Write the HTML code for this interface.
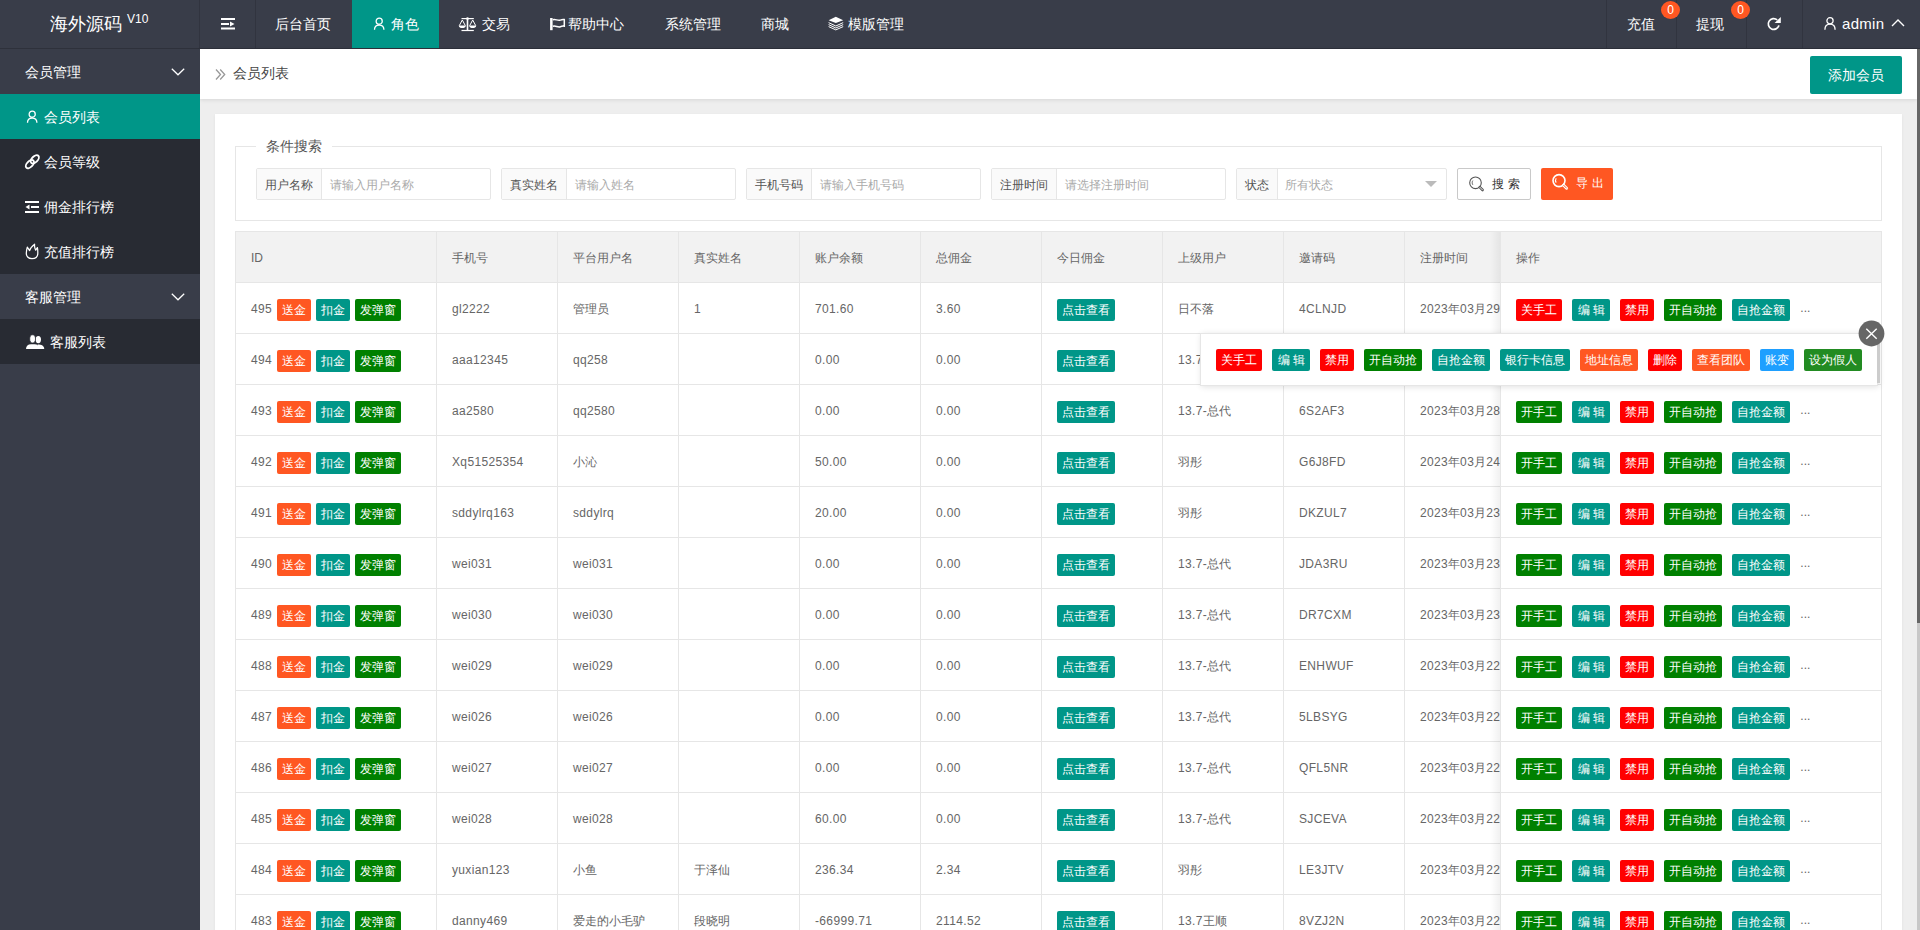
<!DOCTYPE html><html><head><meta charset="utf-8"><title>会员列表</title><style>
*{box-sizing:border-box;margin:0;padding:0}
html,body{width:1920px;height:930px;overflow:hidden}
body{font-family:"Liberation Sans",sans-serif;background:#eeeeee;position:relative;color:#666}
.abs{position:absolute}
svg.abs{z-index:3}
#hdr{left:0;top:0;width:1920px;height:49px;background:#393d49;border-bottom:1px solid #2e313b}
.sep{position:absolute;top:0;width:1px;height:48px;background:#31343f}
.logo{position:absolute;left:0;top:0;width:199px;height:48px;color:#fff;font-size:18px;line-height:48px}
.logo .t{position:absolute;left:50px;top:0}
.logo sup{position:absolute;left:127px;top:-5px;font-size:12px;line-height:48px}
.nav{position:absolute;top:0;height:48px;line-height:48px;font-size:14px;color:#fff;white-space:nowrap}
.nav .ic{position:absolute}
.side{left:0;top:49px;width:200px;height:881px;background:#393d49;z-index:2}
.si{position:absolute;left:0;width:200px;height:45px;line-height:46px;font-size:14px;color:#fff;white-space:nowrap}
.si.child{background:#282b33}
.si.act{background:#009688}
.crumb{left:200px;top:49px;width:1717px;height:50px;background:#fff;box-shadow:0 1px 4px rgba(0,0,0,.1)}
.scroll{left:1917px;top:49px;width:3px;height:881px;background:linear-gradient(to bottom,#666 0,#666 574px,#c8c8c8 574px)}
.card{left:215px;top:114px;width:1687px;height:830px;background:#fff;box-shadow:0 1px 3px rgba(0,0,0,.06)}
.fs{left:235px;top:146px;width:1647px;height:75px;border:1px solid #e6e6e6}
.legend{position:absolute;left:256px;top:136px;padding:0 10px;background:#fff;font-size:14px;line-height:20px;color:#555}
.ig{position:absolute;top:168px;height:32px;border:1px solid #e6e6e6;border-radius:2px;background:#fff;font-size:12px}
.ig .lb{position:absolute;left:0;top:0;height:30px;line-height:32px;background:#fafafa;border-right:1px solid #e6e6e6;color:#555;padding:0 8px}
.ig .ph{position:absolute;top:1px;height:30px;line-height:30px;color:#aaa}
.btn{position:absolute;top:168px;height:32px;line-height:30px;font-size:12px;border-radius:2px}
table{border-collapse:collapse;table-layout:fixed}
.tbw{left:235px;top:231px;width:1266px;height:699px;overflow:hidden}
.tb{position:absolute;left:0;top:0;width:1647px;border:1px solid #e6e6e6}
.tb td{height:51px;border:1px solid #e6e6e6;padding:0 15px;font-size:12px;color:#666;white-space:nowrap;overflow:hidden;line-height:20px}
.tb tr.h td{background:#f2f2f2}
.bd{display:inline-block;height:22px;line-height:22px;padding:0 5px;color:#fff;font-size:12px;border-radius:2px;vertical-align:middle}
.bd.e{padding:0 5.5px}
.la{letter-spacing:0.35px}
.tb tr.b td>div,.fix tr.b td>div{position:relative;top:1px}
.tb tr.b .bd,.fix tr.b .bd{position:relative;top:1px}
.tb tr.h td>div,.fix tr.h td>div{position:relative;top:1px}
.fix{position:absolute;left:1500px;top:231px;width:381px;background:#fff}
.fsh{left:1490px;top:232px;width:10px;height:698px;background:linear-gradient(to right,rgba(0,0,0,0),rgba(0,0,0,.055))}
.fix td{height:51px;border:1px solid #e6e6e6;padding:0 15px 0 15px;font-size:12px;color:#666;white-space:nowrap;line-height:20px}
.fix tr.h td{background:#f2f2f2}
.pop{left:1200px;top:333px;width:678px;height:53px;background:#fff;border:1px solid #e6e6e6;box-shadow:1px 1px 6px rgba(0,0,0,.12)}
</style></head><body>
<div id="hdr" class="abs">
<div class="logo"><span class="t">海外源码</span><sup>V10</sup></div>
<div class="sep" style="left:199px"></div>
<div class="sep" style="left:255px"></div>
<div class="sep" style="left:1606px"></div>
<div class="sep" style="left:1676px"></div>
<div class="sep" style="left:1746px"></div>
<div class="sep" style="left:1802px"></div>
<svg class="abs" style="left:221px;top:17px" width="15" height="14" viewBox="0 0 15 14"><rect x="0" y="1" width="14" height="2" fill="#fff"/><rect x="0" y="6" width="8" height="2" fill="#fff"/><path d="M9 4.5 L13.5 7 L9 9.5Z" fill="#fff"/><rect x="0" y="10.5" width="14" height="2" fill="#fff"/></svg>
<div class="abs" style="left:352px;top:0;width:87px;height:48px;background:#009688"></div>
<div class="nav" style="left:275px">后台首页</div>
<div class="nav" style="left:391px">角色</div>
<div class="nav" style="left:482px">交易</div>
<div class="nav" style="left:568px">帮助中心</div>
<div class="nav" style="left:665px">系统管理</div>
<div class="nav" style="left:761px">商城</div>
<div class="nav" style="left:848px">模版管理</div>
<div class="nav" style="left:1627px">充值</div>
<div class="nav" style="left:1696px">提现</div>
<div class="nav" style="left:1842px;font-size:15px;letter-spacing:0.3px">admin</div>
<svg class="abs" style="left:373px;top:17px" width="13" height="14" viewBox="0 0 13 14"><circle cx="6.2" cy="4.2" r="3.05" fill="none" stroke="#fff" stroke-width="1.3"/><path d="M1.5 12.8 C1.5 9.8 3.4 8.1 6.2 8.1 C9 8.1 10.9 9.8 10.9 12.8" fill="none" stroke="#fff" stroke-width="1.3"/></svg>
<svg class="abs" style="left:1824px;top:17px" width="12" height="13" viewBox="0 0 12 13"><circle cx="6" cy="3.8" r="3.1" fill="none" stroke="#fff" stroke-width="1.3"/><path d="M0.9 12.8 C0.9 9 3.2 7.2 6 7.2 C8.8 7.2 11.1 9 11.1 12.8" fill="none" stroke="#fff" stroke-width="1.3"/></svg>
<svg class="abs" style="left:458px;top:17px" width="19" height="15" viewBox="0 0 19 15"><rect x="3.5" y="1" width="12.3" height="1.2" fill="#fff"/><circle cx="9.5" cy="1.6" r="1.3" fill="#fff"/><rect x="8.7" y="1.5" width="1.6" height="12.3" fill="#fff"/><rect x="3.5" y="12.9" width="12.3" height="1.2" fill="#fff"/><path d="M4.3 3 L1.3 8.6 M4.3 3 L7.3 8.6 M14.7 3 L11.7 8.6 M14.7 3 L17.7 8.6" stroke="#fff" stroke-width="1" fill="none"/><path d="M0.8 8.4 H7.8 C7.8 10.3 6 11.1 4.3 11.1 C2.6 11.1 0.8 10.3 0.8 8.4Z M11.2 8.4 H18.2 C18.2 10.3 16.4 11.1 14.7 11.1 C13 11.1 11.2 10.3 11.2 8.4Z" fill="#fff"/></svg>
<svg class="abs" style="left:550px;top:18px" width="16" height="13" viewBox="0 0 16 13"><rect x="0.1" y="0" width="2.5" height="12.2" fill="#fff"/><path d="M2.8 1.7 C5.3 0.5 7.8 3.1 10.3 2.1 C11.8 1.5 12.8 1.3 14.3 1.6 V8.2 C12.8 7.9 11.8 8.1 10.3 8.7 C7.8 9.7 5.3 7.1 2.8 8.3" fill="none" stroke="#fff" stroke-width="1.5"/></svg>
<svg class="abs" style="left:828px;top:16px" width="16" height="15" viewBox="0 0 16 15"><path d="M0.6 4.2 L7.8 0.8 L15.2 4.2 L7.8 7 Z" fill="#fff"/><path d="M0.6 6.6 L7.8 10 L15.2 6.6 M0.6 8.6 L7.8 12 L15.2 8.6 M0.6 10.6 L7.8 13.9 L15.2 10.6" stroke="#fff" stroke-width="1" fill="none"/></svg>
<svg class="abs" style="left:1766px;top:16px" width="16" height="16" viewBox="0 0 16 16"><path d="M12.9 9.4 A5.4 5.4 0 1 1 11.2 3.9" fill="none" stroke="#fff" stroke-width="1.7"/><path d="M14.8 1 L14.8 7 L8.6 7 Z" fill="#fff"/></svg>
<svg class="abs" style="left:1891px;top:18px" width="14" height="10" viewBox="0 0 14 10"><path d="M1 8 L7 2 L13 8" fill="none" stroke="#fff" stroke-width="1.4"/></svg>
<div class="abs" style="left:1661.0px;top:1px;width:19px;height:18px;border-radius:50%;background:#ff5722;color:#fff;font-size:12px;line-height:18px;text-align:center">0</div>
<div class="abs" style="left:1731.0px;top:1px;width:19px;height:18px;border-radius:50%;background:#ff5722;color:#fff;font-size:12px;line-height:18px;text-align:center">0</div>
</div>
<div class="side abs">
<div class="si" style="top:0px"><span class="abs" style="left:25px;top:0">会员管理</span></div>
<div class="si act" style="top:45px"><span class="abs" style="left:44px;top:0">会员列表</span></div>
<div class="si child" style="top:90px"><span class="abs" style="left:44px;top:0">会员等级</span></div>
<div class="si child" style="top:135px"><span class="abs" style="left:44px;top:0">佣金排行榜</span></div>
<div class="si child" style="top:180px"><span class="abs" style="left:44px;top:0">充值排行榜</span></div>
<div class="si" style="top:225px"><span class="abs" style="left:25px;top:0">客服管理</span></div>
<div class="si child" style="top:270px"><span class="abs" style="left:50px;top:0">客服列表</span></div>
<svg class="abs" style="left:171px;top:19px" width="14" height="9" viewBox="0 0 14 9"><path d="M0.8 0.8 L7 6.8 L13.2 0.8" fill="none" stroke="#fff" stroke-width="1.25"/></svg>
<svg class="abs" style="left:171px;top:244px" width="14" height="9" viewBox="0 0 14 9"><path d="M0.8 0.8 L7 6.8 L13.2 0.8" fill="none" stroke="#fff" stroke-width="1.25"/></svg>
</div>
<svg class="abs" style="left:26px;top:110px" width="13" height="14" viewBox="0 0 13 14"><circle cx="6.2" cy="4.2" r="3.05" fill="none" stroke="#fff" stroke-width="1.3"/><path d="M1.5 12.8 C1.5 9.8 3.4 8.1 6.2 8.1 C9 8.1 10.9 9.8 10.9 12.8" fill="none" stroke="#fff" stroke-width="1.3"/></svg>
<svg class="abs" style="left:24px;top:153px" width="17" height="17" viewBox="0 0 17 17"><ellipse cx="10.8" cy="6.3" rx="5" ry="2.9" transform="rotate(-45 10.8 6.3)" fill="none" stroke="#fff" stroke-width="1.9"/><ellipse cx="5.9" cy="11.1" rx="5" ry="2.9" transform="rotate(-45 5.9 11.1)" fill="none" stroke="#fff" stroke-width="1.9"/></svg>
<svg class="abs" style="left:25px;top:200px" width="14" height="14" viewBox="0 0 14 14"><rect x="0" y="1" width="14" height="2" fill="#fff"/><rect x="6" y="6" width="8" height="2" fill="#fff"/><path d="M4.5 4.5 L0.5 7 L4.5 9.5Z" fill="#fff"/><rect x="0" y="11" width="14" height="2" fill="#fff"/></svg>
<svg class="abs" style="left:25px;top:243px" width="14" height="17" viewBox="0 0 14 17"><path d="M7 15.6 C3 15.6 1.3 13 1.3 10.3 C1.3 7.8 1.8 6 2.3 4.2 L4.6 7.6 C5.2 5 7.3 3 9.6 1.2 C9.3 3.6 9.9 5.6 10.7 7.2 L12.4 4.6 C12.9 6.5 12.8 8.5 12.8 10.3 C12.8 13 11 15.6 7 15.6Z" fill="none" stroke="#fff" stroke-width="1.25" stroke-linejoin="round"/></svg>
<svg class="abs" style="left:25px;top:334px" width="20" height="16" viewBox="0 0 20 16"><ellipse cx="13.3" cy="5.6" rx="2.7" ry="3.7" fill="#fff"/><path d="M12.5 10.6 C16.8 10.6 19.2 12 19.2 15 H13 Z" fill="#fff"/><ellipse cx="7.6" cy="4.9" rx="2.9" ry="4.1" fill="#fff" stroke="#282b33" stroke-width="0.8"/><path d="M1 15 C1 12 3 10.3 6 10.3 H9.5 C12.5 10.3 14.3 12 14.3 15Z" fill="#fff"/></svg>
<div class="crumb abs"></div>
<svg class="abs" style="left:215px;top:68px" width="12" height="13" viewBox="0 0 12 13"><path d="M1 1.5 L5.5 6.5 L1 11.5 M5.2 1.5 L9.7 6.5 L5.2 11.5" fill="none" stroke="#999" stroke-width="1.3"/></svg>
<div class="abs" style="left:233px;top:63px;font-size:14px;line-height:20px;color:#444">会员列表</div>
<div class="abs" style="left:1810px;top:56px;width:92px;height:38px;background:#009688;border-radius:2px;color:#fff;font-size:14px;line-height:38px;text-align:center">添加会员</div>
<div class="scroll abs"></div>
<div class="card abs"></div>
<div class="fs abs"></div>
<div class="legend">条件搜索</div>
<div class="ig" style="left:256px;width:235px"><span class="lb" style="width:65px">用户名称</span><span class="ph" style="left:73px">请输入用户名称</span></div>
<div class="ig" style="left:501px;width:235px"><span class="lb" style="width:65px">真实姓名</span><span class="ph" style="left:73px">请输入姓名</span></div>
<div class="ig" style="left:746px;width:235px"><span class="lb" style="width:65px">手机号码</span><span class="ph" style="left:73px">请输入手机号码</span></div>
<div class="ig" style="left:991px;width:235px"><span class="lb" style="width:65px">注册时间</span><span class="ph" style="left:73px">请选择注册时间</span></div>
<div class="ig" style="left:1236px;width:211px"><span class="lb" style="width:41px">状态</span><span class="ph" style="left:48px">所有状态</span><svg class="abs" style="left:188px;top:12px" width="12" height="7" viewBox="0 0 12 7"><path d="M0 0 H12 L6 6Z" fill="#bbb"/></svg></div>
<div class="btn" style="left:1457px;width:74px;border:1px solid #c9c9c9;background:#fff;color:#333"><svg class="abs" style="left:10px;top:7px" width="17" height="17" viewBox="0 0 17 17"><circle cx="7.5" cy="6.8" r="5.8" fill="none" stroke="#555" stroke-width="1.1"/><path d="M11.8 11.2 L14.6 14" stroke="#555" stroke-width="2.6" stroke-linecap="round"/><path d="M11.9 11.3 L14.5 13.9" stroke="#fff" stroke-width="0.9" stroke-linecap="round"/><path d="M4.8 4.6 C4 5.8 4 7.6 4.8 8.8" fill="none" stroke="#555" stroke-width="0.9"/></svg><span class="abs" style="left:34px;top:0;letter-spacing:4px">搜索</span></div>
<div class="btn" style="left:1541px;width:72px;background:#ff5722;color:#fff"><svg class="abs" style="left:10px;top:5px" width="19" height="19" viewBox="0 0 19 19"><circle cx="8" cy="7.6" r="6" fill="none" stroke="#fff" stroke-width="1.6"/><path d="M12.6 12.2 L15.6 15.2" stroke="#fff" stroke-width="3" stroke-linecap="round"/><path d="M12.7 12.3 L15.5 15.1" stroke="#ff5722" stroke-width="1" stroke-linecap="round"/><path d="M5.2 5.2 C4.4 6.4 4.4 8.4 5.2 9.6" fill="none" stroke="#fff" stroke-width="1.1"/></svg><span class="abs" style="left:35px;top:0;letter-spacing:4px">导出</span></div>
<div class="tbw abs"><table class="tb"><colgroup><col style="width:201px"><col style="width:121px"><col style="width:121px"><col style="width:121px"><col style="width:121px"><col style="width:121px"><col style="width:121px"><col style="width:121px"><col style="width:121px"><col style="width:478px"></colgroup>
<tr class="h"><td><div>ID</div></td><td><div>手机号</div></td><td><div>平台用户名</div></td><td><div>真实姓名</div></td><td><div>账户余额</div></td><td><div>总佣金</div></td><td><div>今日佣金</div></td><td><div>上级用户</div></td><td><div>邀请码</div></td><td><div>注册时间</div></td></tr>
<tr class="b"><td><div><span style="position:relative;top:1px"><span class="la">495</span></span><span class="bd" style="background:#ff5722;margin-left:5px">送金</span><span class="bd" style="background:#009688;margin-left:5px">扣金</span><span class="bd" style="background:#008000;margin-left:5px">发弹窗</span></div></td><td><div><span class="la">gl2222</span></div></td><td><div>管理员</div></td><td><div><span class="la">1</span></div></td><td><div><span class="la">701.60</span></div></td><td><div><span class="la">3.60</span></div></td><td><div><span class="bd" style="background:#009688;margin-left:0px">点击查看</span></div></td><td><div>日不落</div></td><td><div><span class="la">4CLNJD</span></div></td><td><div><span class="la">2023</span>年<span class="la">03</span>月<span class="la">29</span></div></td></tr>
<tr class="b"><td><div><span style="position:relative;top:1px"><span class="la">494</span></span><span class="bd" style="background:#ff5722;margin-left:5px">送金</span><span class="bd" style="background:#009688;margin-left:5px">扣金</span><span class="bd" style="background:#008000;margin-left:5px">发弹窗</span></div></td><td><div><span class="la">aaa12345</span></div></td><td><div><span class="la">qq258</span></div></td><td><div></div></td><td><div><span class="la">0.00</span></div></td><td><div><span class="la">0.00</span></div></td><td><div><span class="bd" style="background:#009688;margin-left:0px">点击查看</span></div></td><td><div><span class="la">13.7-</span>总代</div></td><td><div><span class="la">6S2AF3</span></div></td><td><div><span class="la">2023</span>年<span class="la">03</span>月<span class="la">28</span></div></td></tr>
<tr class="b"><td><div><span style="position:relative;top:1px"><span class="la">493</span></span><span class="bd" style="background:#ff5722;margin-left:5px">送金</span><span class="bd" style="background:#009688;margin-left:5px">扣金</span><span class="bd" style="background:#008000;margin-left:5px">发弹窗</span></div></td><td><div><span class="la">aa2580</span></div></td><td><div><span class="la">qq2580</span></div></td><td><div></div></td><td><div><span class="la">0.00</span></div></td><td><div><span class="la">0.00</span></div></td><td><div><span class="bd" style="background:#009688;margin-left:0px">点击查看</span></div></td><td><div><span class="la">13.7-</span>总代</div></td><td><div><span class="la">6S2AF3</span></div></td><td><div><span class="la">2023</span>年<span class="la">03</span>月<span class="la">28</span></div></td></tr>
<tr class="b"><td><div><span style="position:relative;top:1px"><span class="la">492</span></span><span class="bd" style="background:#ff5722;margin-left:5px">送金</span><span class="bd" style="background:#009688;margin-left:5px">扣金</span><span class="bd" style="background:#008000;margin-left:5px">发弹窗</span></div></td><td><div><span class="la">Xq51525354</span></div></td><td><div>小沁</div></td><td><div></div></td><td><div><span class="la">50.00</span></div></td><td><div><span class="la">0.00</span></div></td><td><div><span class="bd" style="background:#009688;margin-left:0px">点击查看</span></div></td><td><div>羽彤</div></td><td><div><span class="la">G6J8FD</span></div></td><td><div><span class="la">2023</span>年<span class="la">03</span>月<span class="la">24</span></div></td></tr>
<tr class="b"><td><div><span style="position:relative;top:1px"><span class="la">491</span></span><span class="bd" style="background:#ff5722;margin-left:5px">送金</span><span class="bd" style="background:#009688;margin-left:5px">扣金</span><span class="bd" style="background:#008000;margin-left:5px">发弹窗</span></div></td><td><div><span class="la">sddylrq163</span></div></td><td><div><span class="la">sddylrq</span></div></td><td><div></div></td><td><div><span class="la">20.00</span></div></td><td><div><span class="la">0.00</span></div></td><td><div><span class="bd" style="background:#009688;margin-left:0px">点击查看</span></div></td><td><div>羽彤</div></td><td><div><span class="la">DKZUL7</span></div></td><td><div><span class="la">2023</span>年<span class="la">03</span>月<span class="la">23</span></div></td></tr>
<tr class="b"><td><div><span style="position:relative;top:1px"><span class="la">490</span></span><span class="bd" style="background:#ff5722;margin-left:5px">送金</span><span class="bd" style="background:#009688;margin-left:5px">扣金</span><span class="bd" style="background:#008000;margin-left:5px">发弹窗</span></div></td><td><div><span class="la">wei031</span></div></td><td><div><span class="la">wei031</span></div></td><td><div></div></td><td><div><span class="la">0.00</span></div></td><td><div><span class="la">0.00</span></div></td><td><div><span class="bd" style="background:#009688;margin-left:0px">点击查看</span></div></td><td><div><span class="la">13.7-</span>总代</div></td><td><div><span class="la">JDA3RU</span></div></td><td><div><span class="la">2023</span>年<span class="la">03</span>月<span class="la">23</span></div></td></tr>
<tr class="b"><td><div><span style="position:relative;top:1px"><span class="la">489</span></span><span class="bd" style="background:#ff5722;margin-left:5px">送金</span><span class="bd" style="background:#009688;margin-left:5px">扣金</span><span class="bd" style="background:#008000;margin-left:5px">发弹窗</span></div></td><td><div><span class="la">wei030</span></div></td><td><div><span class="la">wei030</span></div></td><td><div></div></td><td><div><span class="la">0.00</span></div></td><td><div><span class="la">0.00</span></div></td><td><div><span class="bd" style="background:#009688;margin-left:0px">点击查看</span></div></td><td><div><span class="la">13.7-</span>总代</div></td><td><div><span class="la">DR7CXM</span></div></td><td><div><span class="la">2023</span>年<span class="la">03</span>月<span class="la">23</span></div></td></tr>
<tr class="b"><td><div><span style="position:relative;top:1px"><span class="la">488</span></span><span class="bd" style="background:#ff5722;margin-left:5px">送金</span><span class="bd" style="background:#009688;margin-left:5px">扣金</span><span class="bd" style="background:#008000;margin-left:5px">发弹窗</span></div></td><td><div><span class="la">wei029</span></div></td><td><div><span class="la">wei029</span></div></td><td><div></div></td><td><div><span class="la">0.00</span></div></td><td><div><span class="la">0.00</span></div></td><td><div><span class="bd" style="background:#009688;margin-left:0px">点击查看</span></div></td><td><div><span class="la">13.7-</span>总代</div></td><td><div><span class="la">ENHWUF</span></div></td><td><div><span class="la">2023</span>年<span class="la">03</span>月<span class="la">22</span></div></td></tr>
<tr class="b"><td><div><span style="position:relative;top:1px"><span class="la">487</span></span><span class="bd" style="background:#ff5722;margin-left:5px">送金</span><span class="bd" style="background:#009688;margin-left:5px">扣金</span><span class="bd" style="background:#008000;margin-left:5px">发弹窗</span></div></td><td><div><span class="la">wei026</span></div></td><td><div><span class="la">wei026</span></div></td><td><div></div></td><td><div><span class="la">0.00</span></div></td><td><div><span class="la">0.00</span></div></td><td><div><span class="bd" style="background:#009688;margin-left:0px">点击查看</span></div></td><td><div><span class="la">13.7-</span>总代</div></td><td><div><span class="la">5LBSYG</span></div></td><td><div><span class="la">2023</span>年<span class="la">03</span>月<span class="la">22</span></div></td></tr>
<tr class="b"><td><div><span style="position:relative;top:1px"><span class="la">486</span></span><span class="bd" style="background:#ff5722;margin-left:5px">送金</span><span class="bd" style="background:#009688;margin-left:5px">扣金</span><span class="bd" style="background:#008000;margin-left:5px">发弹窗</span></div></td><td><div><span class="la">wei027</span></div></td><td><div><span class="la">wei027</span></div></td><td><div></div></td><td><div><span class="la">0.00</span></div></td><td><div><span class="la">0.00</span></div></td><td><div><span class="bd" style="background:#009688;margin-left:0px">点击查看</span></div></td><td><div><span class="la">13.7-</span>总代</div></td><td><div><span class="la">QFL5NR</span></div></td><td><div><span class="la">2023</span>年<span class="la">03</span>月<span class="la">22</span></div></td></tr>
<tr class="b"><td><div><span style="position:relative;top:1px"><span class="la">485</span></span><span class="bd" style="background:#ff5722;margin-left:5px">送金</span><span class="bd" style="background:#009688;margin-left:5px">扣金</span><span class="bd" style="background:#008000;margin-left:5px">发弹窗</span></div></td><td><div><span class="la">wei028</span></div></td><td><div><span class="la">wei028</span></div></td><td><div></div></td><td><div><span class="la">60.00</span></div></td><td><div><span class="la">0.00</span></div></td><td><div><span class="bd" style="background:#009688;margin-left:0px">点击查看</span></div></td><td><div><span class="la">13.7-</span>总代</div></td><td><div><span class="la">SJCEVA</span></div></td><td><div><span class="la">2023</span>年<span class="la">03</span>月<span class="la">22</span></div></td></tr>
<tr class="b"><td><div><span style="position:relative;top:1px"><span class="la">484</span></span><span class="bd" style="background:#ff5722;margin-left:5px">送金</span><span class="bd" style="background:#009688;margin-left:5px">扣金</span><span class="bd" style="background:#008000;margin-left:5px">发弹窗</span></div></td><td><div><span class="la">yuxian123</span></div></td><td><div>小鱼</div></td><td><div>于泽仙</div></td><td><div><span class="la">236.34</span></div></td><td><div><span class="la">2.34</span></div></td><td><div><span class="bd" style="background:#009688;margin-left:0px">点击查看</span></div></td><td><div>羽彤</div></td><td><div><span class="la">LE3JTV</span></div></td><td><div><span class="la">2023</span>年<span class="la">03</span>月<span class="la">22</span></div></td></tr>
<tr class="b"><td><div><span style="position:relative;top:1px"><span class="la">483</span></span><span class="bd" style="background:#ff5722;margin-left:5px">送金</span><span class="bd" style="background:#009688;margin-left:5px">扣金</span><span class="bd" style="background:#008000;margin-left:5px">发弹窗</span></div></td><td><div><span class="la">danny469</span></div></td><td><div>爱走的小毛驴</div></td><td><div>段晓明</div></td><td><div><span class="la">-66999.71</span></div></td><td><div><span class="la">2114.52</span></div></td><td><div><span class="bd" style="background:#009688;margin-left:0px">点击查看</span></div></td><td><div><span class="la">13.7</span>王顺</div></td><td><div><span class="la">8VZJ2N</span></div></td><td><div><span class="la">2023</span>年<span class="la">03</span>月<span class="la">22</span></div></td></tr>
</table></div>
<div class="fsh abs"></div>
<table class="fix"><colgroup><col style="width:381px"></colgroup>
<tr class="h"><td><div>操作</div></td></tr>
<tr class="b"><td><div><span class="bd" style="background:#ff0000;margin-left:0px">关手工</span><span class="bd e" style="background:#009688;margin-left:10px">编 辑</span><span class="bd" style="background:#ff0000;margin-left:10px">禁用</span><span class="bd" style="background:#008000;margin-left:10px">开自动抢</span><span class="bd" style="background:#009688;margin-left:10px">自抢金额</span><span style="margin-left:10px">...</span></div></td></tr>
<tr class="b"><td><div><span class="bd" style="background:#008000;margin-left:0px">开手工</span><span class="bd e" style="background:#009688;margin-left:10px">编 辑</span><span class="bd" style="background:#ff0000;margin-left:10px">禁用</span><span class="bd" style="background:#008000;margin-left:10px">开自动抢</span><span class="bd" style="background:#009688;margin-left:10px">自抢金额</span><span style="margin-left:10px">...</span></div></td></tr>
<tr class="b"><td><div><span class="bd" style="background:#008000;margin-left:0px">开手工</span><span class="bd e" style="background:#009688;margin-left:10px">编 辑</span><span class="bd" style="background:#ff0000;margin-left:10px">禁用</span><span class="bd" style="background:#008000;margin-left:10px">开自动抢</span><span class="bd" style="background:#009688;margin-left:10px">自抢金额</span><span style="margin-left:10px">...</span></div></td></tr>
<tr class="b"><td><div><span class="bd" style="background:#008000;margin-left:0px">开手工</span><span class="bd e" style="background:#009688;margin-left:10px">编 辑</span><span class="bd" style="background:#ff0000;margin-left:10px">禁用</span><span class="bd" style="background:#008000;margin-left:10px">开自动抢</span><span class="bd" style="background:#009688;margin-left:10px">自抢金额</span><span style="margin-left:10px">...</span></div></td></tr>
<tr class="b"><td><div><span class="bd" style="background:#008000;margin-left:0px">开手工</span><span class="bd e" style="background:#009688;margin-left:10px">编 辑</span><span class="bd" style="background:#ff0000;margin-left:10px">禁用</span><span class="bd" style="background:#008000;margin-left:10px">开自动抢</span><span class="bd" style="background:#009688;margin-left:10px">自抢金额</span><span style="margin-left:10px">...</span></div></td></tr>
<tr class="b"><td><div><span class="bd" style="background:#008000;margin-left:0px">开手工</span><span class="bd e" style="background:#009688;margin-left:10px">编 辑</span><span class="bd" style="background:#ff0000;margin-left:10px">禁用</span><span class="bd" style="background:#008000;margin-left:10px">开自动抢</span><span class="bd" style="background:#009688;margin-left:10px">自抢金额</span><span style="margin-left:10px">...</span></div></td></tr>
<tr class="b"><td><div><span class="bd" style="background:#008000;margin-left:0px">开手工</span><span class="bd e" style="background:#009688;margin-left:10px">编 辑</span><span class="bd" style="background:#ff0000;margin-left:10px">禁用</span><span class="bd" style="background:#008000;margin-left:10px">开自动抢</span><span class="bd" style="background:#009688;margin-left:10px">自抢金额</span><span style="margin-left:10px">...</span></div></td></tr>
<tr class="b"><td><div><span class="bd" style="background:#008000;margin-left:0px">开手工</span><span class="bd e" style="background:#009688;margin-left:10px">编 辑</span><span class="bd" style="background:#ff0000;margin-left:10px">禁用</span><span class="bd" style="background:#008000;margin-left:10px">开自动抢</span><span class="bd" style="background:#009688;margin-left:10px">自抢金额</span><span style="margin-left:10px">...</span></div></td></tr>
<tr class="b"><td><div><span class="bd" style="background:#008000;margin-left:0px">开手工</span><span class="bd e" style="background:#009688;margin-left:10px">编 辑</span><span class="bd" style="background:#ff0000;margin-left:10px">禁用</span><span class="bd" style="background:#008000;margin-left:10px">开自动抢</span><span class="bd" style="background:#009688;margin-left:10px">自抢金额</span><span style="margin-left:10px">...</span></div></td></tr>
<tr class="b"><td><div><span class="bd" style="background:#008000;margin-left:0px">开手工</span><span class="bd e" style="background:#009688;margin-left:10px">编 辑</span><span class="bd" style="background:#ff0000;margin-left:10px">禁用</span><span class="bd" style="background:#008000;margin-left:10px">开自动抢</span><span class="bd" style="background:#009688;margin-left:10px">自抢金额</span><span style="margin-left:10px">...</span></div></td></tr>
<tr class="b"><td><div><span class="bd" style="background:#008000;margin-left:0px">开手工</span><span class="bd e" style="background:#009688;margin-left:10px">编 辑</span><span class="bd" style="background:#ff0000;margin-left:10px">禁用</span><span class="bd" style="background:#008000;margin-left:10px">开自动抢</span><span class="bd" style="background:#009688;margin-left:10px">自抢金额</span><span style="margin-left:10px">...</span></div></td></tr>
<tr class="b"><td><div><span class="bd" style="background:#008000;margin-left:0px">开手工</span><span class="bd e" style="background:#009688;margin-left:10px">编 辑</span><span class="bd" style="background:#ff0000;margin-left:10px">禁用</span><span class="bd" style="background:#008000;margin-left:10px">开自动抢</span><span class="bd" style="background:#009688;margin-left:10px">自抢金额</span><span style="margin-left:10px">...</span></div></td></tr>
<tr class="b"><td><div><span class="bd" style="background:#008000;margin-left:0px">开手工</span><span class="bd e" style="background:#009688;margin-left:10px">编 辑</span><span class="bd" style="background:#ff0000;margin-left:10px">禁用</span><span class="bd" style="background:#008000;margin-left:10px">开自动抢</span><span class="bd" style="background:#009688;margin-left:10px">自抢金额</span><span style="margin-left:10px">...</span></div></td></tr>
</table>
<div class="pop abs"><div class="abs" style="left:15px;top:15px;white-space:nowrap;font-size:0"><span class="bd" style="background:#ff0000;margin-left:0px">关手工</span><span class="bd e" style="background:#009688;margin-left:10px">编 辑</span><span class="bd" style="background:#ff0000;margin-left:10px">禁用</span><span class="bd" style="background:#008000;margin-left:10px">开自动抢</span><span class="bd" style="background:#009688;margin-left:10px">自抢金额</span><span class="bd" style="background:#009688;margin-left:10px">银行卡信息</span><span class="bd" style="background:#ff5722;margin-left:10px">地址信息</span><span class="bd" style="background:#ff0000;margin-left:10px">删除</span><span class="bd" style="background:#ff5722;margin-left:10px">查看团队</span><span class="bd" style="background:#1e9fff;margin-left:10px">账变</span><span class="bd" style="background:#228b22;margin-left:10px">设为假人</span></div><div class="abs" style="left:676px;top:3px;width:3px;height:46px;background:#ccc"></div></div>
<svg class="abs" style="left:1857.5px;top:319.5px" width="27" height="27" viewBox="0 0 27 27"><circle cx="13.5" cy="13.5" r="12.9" fill="#666"/><path d="M8.3 8.8 L18.7 18.8 M18.7 8.8 L8.3 18.8" stroke="#fff" stroke-width="1.4"/></svg>
</body></html>
